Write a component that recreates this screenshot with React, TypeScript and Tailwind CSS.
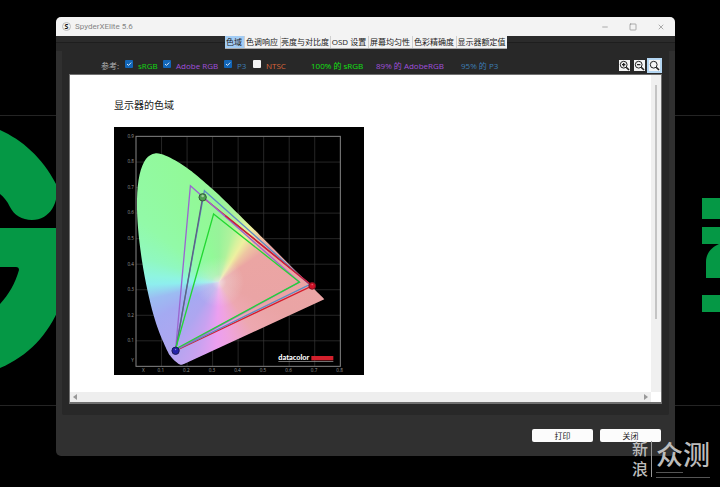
import { useState } from "react";
import { Minus, Square, X } from "lucide-react";

const TABS = [
  { name: "色域", width: "w-5" },
  { name: "色调响应", width: "w-9" },
  { name: "亮度与对比度", width: "w-[50px]" },
  { name: "OSD 设置", width: "w-[38px]" },
  { name: "屏幕均匀性", width: "w-11" },
  { name: "色彩精确度", width: "w-11" },
  { name: "显示器额定值", width: "w-[50px]" },
];

const SPACES = [
  { id: "srgb", name: "sRGB", on: true, style: "w-[38px] text-[#12d812]" },
  { id: "adobe", name: "Adobe RGB", on: true, style: "w-[61px] text-[#a050dc]" },
  { id: "p3", name: "P3", on: true, style: "w-[29px] text-[#3d7eb4]" },
  { id: "ntsc", name: "NTSC", on: false, style: "w-[58px] text-[#d8663a]" },
];

const COVERAGE = [
  { text: "100% 的 sRGB", style: "w-[65px] text-[#12e012]" },
  { text: "89% 的 AdobeRGB", style: "w-[85px] text-[#a050dc]" },
  { text: "95% 的 P3", style: "text-[#3d7eb4]" },
];

// CIE 1931 spectral locus, 380 nm to 700 nm
const LOCUS = [
  [0.19, 0.01], [0.1741, 0.006], [0.1566, 0.0177], [0.1355, 0.0399],
  [0.1241, 0.0578], [0.0913, 0.1327], [0.0687, 0.2007], [0.0454, 0.295],
  [0.0235, 0.4127], [0.0082, 0.5384], [0.0039, 0.6548], [0.0139, 0.7502],
  [0.0389, 0.812], [0.0743, 0.8338], [0.1142, 0.8262], [0.1547, 0.8059],
  [0.1929, 0.7816], [0.2296, 0.7543], [0.3016, 0.6923], [0.3731, 0.6245],
  [0.5125, 0.4866], [0.627, 0.3725], [0.6915, 0.3083], [0.7376, 0.263],
];

// The chart is drawn at three units per pixel
const px = (x: number) => 66 + x * 766;
const py = (y: number) => 718 - y * 766;

function points(list: number[][]) {
  return list.map(([x, y]) => `${px(x)},${py(y)}`).join(" ");
}

function smoothPath(list: number[][]) {
  const p = list.map(([x, y]) => [px(x), py(y)]);
  let d = `M${p[0][0]} ${p[0][1]}`;
  for (let i = 0; i < p.length - 1; i++) {
    const a = p[Math.max(i - 1, 0)];
    const b = p[i];
    const c = p[i + 1];
    const e = p[Math.min(i + 2, p.length - 1)];
    d += `C${b[0] + (c[0] - a[0]) / 6} ${b[1] + (c[1] - a[1]) / 6} ${c[0] - (e[0] - b[0]) / 6} ${c[1] - (e[1] - b[1]) / 6} ${c[0]} ${c[1]}`;
  }
  return d + "Z";
}

function GamutChart() {
  const xs = [0.1, 0.2, 0.3, 0.4, 0.5, 0.6, 0.7];
  const ys = [...xs, 0.8];

  return (
    <svg
      viewBox="0 0 750 744"
      className="block h-[248px] w-[250px] bg-black"
      role="img"
      aria-label="显示器的色域"
    >
      <defs>
        <clipPath id="locus">
          <path d={smoothPath(LOCUS)} />
        </clipPath>
        <radialGradient id="white">
          <stop offset="0" stopColor="#f2e6ea" stopOpacity="0.85" />
          <stop offset="0.3" stopColor="#f0e4e8" stopOpacity="0.35" />
          <stop offset="1" stopColor="#eee" stopOpacity="0" />
        </radialGradient>
      </defs>

      <g stroke="#3a3a3a" strokeWidth="2">
        {xs.map((v) => (
          <line key={v} x1={px(v)} x2={px(v)} y1={py(0.9)} y2={py(0)} />
        ))}
        {ys.map((v) => (
          <line key={v} x1={px(0)} x2={px(0.8)} y1={py(v)} y2={py(v)} />
        ))}
      </g>
      <rect x="66" y="28" width="613" height="690" fill="none" stroke="#858585" strokeWidth="3" />

      <g clipPath="url(#locus)">
        <foreignObject x="0" y="0" width="750" height="744">
          <div className="h-[744px] w-[750px] bg-[conic-gradient(from_0deg_at_315px_465px,#98f39a_0deg,#b0f29c_14deg,#d8f29e_24deg,#eef0a0_31deg,#eec6a2_42deg,#eba5a3_56deg,#eaa4a5_115deg,#eda8b0_145deg,#efa3df_170deg,#ec9ff0_182deg,#c8a2f0_198deg,#aea6f0_215deg,#a4aaf2_240deg,#9cbcf2_256deg,#8eeeee_268deg,#8ff5e0_275deg,#90f8c0_288deg,#92faa8_308deg,#92f998_345deg,#98f39a_360deg)]" />
        </foreignObject>
        <circle cx="315" cy="465" r="75" fill="url(#white)" />
      </g>

      <g fill="none" strokeWidth="4">
        <polyline points={points([[0.261, 0.662], [0.69, 0.315], [0.155, 0.061]])} stroke="#d51c2c" />
        <polygon points={points([[0.268, 0.688], [0.68, 0.32], [0.155, 0.064]])} stroke="#5d8cc4" />
        <polygon points={points([[0.213, 0.707], [0.64, 0.33], [0.155, 0.064]])} stroke="#9a66d0" />
        <line x1={px(0.35)} y1={py(0.59)} x2={px(0.69)} y2={py(0.315)} stroke="#c81e3c" />
        <polyline points={points([[0.261, 0.662], [0.155, 0.061]])} stroke="#5d6480" />
        <polygon points={points([[0.304, 0.597], [0.64, 0.33], [0.155, 0.068]])} stroke="#22d832" />
      </g>

      <g strokeWidth="3">
        <circle cx={px(0.261)} cy={py(0.662)} r="11" fill="#4f9e4f" stroke="#33583a" />
        <circle cx={px(0.69)} cy={py(0.315)} r="10" fill="#d01026" stroke="#7a1420" />
        <circle cx={px(0.155)} cy={py(0.061)} r="11" fill="#2424a8" stroke="#1b1b58" />
      </g>
      <g fill="#fff" fillOpacity="0.45">
        <circle cx={px(0.261)} cy={py(0.667)} r="4" />
        <circle cx={px(0.69)} cy={py(0.32)} r="2" />
        <circle cx={px(0.155)} cy={py(0.066)} r="2" />
      </g>

      <g fill="#999" fontFamily="Open Sans, sans-serif" fontSize="14">
        {[...ys, 0.9].map((v) => (
          <text key={v} x="60" y={py(v) + 4} textAnchor="end">
            {v}
          </text>
        ))}
        {[...xs, 0.8].map((v) => (
          <text key={v} x={px(v) - 2} y="735" textAnchor="middle">
            {v}
          </text>
        ))}
        <text x="84" y="735">X</text>
        <text x="52" y="704">Y</text>
      </g>

      <text x="493" y="699" fill="#fff" fontFamily="Lato, sans-serif" fontSize="22" fontWeight="900">
        datacolor
      </text>
      <rect x="592" y="687" width="66" height="13" fill="#d3202c" />
      <rect x="493" y="703" width="165" height="2" fill="#aaa" />
    </svg>
  );
}

function Wallpaper() {
  return (
    <div className="absolute inset-0 overflow-hidden">
      <div className="absolute inset-x-0 top-[115px] h-[291px] border-y border-[#242424]" />
      <svg className="absolute top-[115px] left-0 h-[290px] w-[60px]" viewBox="0 115 60 290" fill="#059845">
        <path d="M0 130C22 140 42 157 56 184C60 202 50 220 32 220C22 220 14 215 10 207C7 201 4 197 0 194Z" />
        <path d="M0 228H60V306C48 335 28 356 0 368V304C9 294 15 284 19 270Q19 267 16 267H0Z" />
      </svg>
      <svg className="absolute top-[190px] right-0 h-[130px] w-[18px]" viewBox="702 190 18 130" fill="#059845">
        <path d="M702 198H720V219H702ZM702 227H720V278H706V262C706 253 712 247 719 244H702ZM702 295H720V312H702Z" />
      </svg>
    </div>
  );
}

function ZoomIcon({ sign }: { sign?: "plus" | "minus" }) {
  return (
    <svg viewBox="0 0 11 11" className="size-[11px]" fill="none" stroke="#222">
      <circle cx="4.7" cy="4.7" r="3.4" />
      <path d="M7.2 7.2L10 10" strokeWidth="1.6" />
      {sign && <path d="M3 4.7H6.4" strokeWidth="1.3" />}
      {sign === "plus" && <path d="M4.7 3V6.4" strokeWidth="1.3" />}
    </svg>
  );
}

function Toolbar() {
  const [checked, setChecked] = useState<Record<string, boolean>>(
    Object.fromEntries(SPACES.map((s) => [s.id, s.on])),
  );

  return (
    <div className="flex h-[15px] items-center pl-8 text-[8px]">
      <span className="w-6 text-[#b0b0b0]">参考:</span>
      {SPACES.map((s) => (
        <label key={s.id} className={`flex items-center gap-[5px] whitespace-nowrap ${s.style}`}>
          <span className="relative mb-[3px] block size-2">
            <input
              type="checkbox"
              className="block size-2 appearance-none rounded-[1px] bg-[#f4f4f4] checked:bg-[#1266b8]"
              checked={checked[s.id]}
              onChange={(e) => setChecked({ ...checked, [s.id]: e.target.checked })}
            />
            {checked[s.id] && (
              <svg viewBox="0 0 8 8" className="pointer-events-none absolute inset-0" fill="none" stroke="#d8e8f8">
                <path d="M2 4L3.5 5.4L6.2 2.6" />
              </svg>
            )}
          </span>
          {s.name}
        </label>
      ))}
      {COVERAGE.map((c) => (
        <span key={c.text} className={`whitespace-nowrap ${c.style}`}>
          {c.text}
        </span>
      ))}
      <div className="ml-auto flex items-center">
        <button type="button" aria-label="放大" className="mr-1 bg-[#f4f4f4]">
          <ZoomIcon sign="plus" />
        </button>
        <button type="button" aria-label="缩小" className="mr-[2px] bg-[#f4f4f4]">
          <ZoomIcon sign="minus" />
        </button>
        <button type="button" aria-label="适合窗口" className="border-2 border-[#b4d6f2] bg-[#f4f4f4]">
          <ZoomIcon />
        </button>
      </div>
    </div>
  );
}

function Watermark() {
  return (
    <div className="absolute right-[10px] bottom-[10px] flex items-start gap-1 font-medium text-[#bcbcbc]">
      <div className="flex w-[20px] flex-col gap-1 border-r border-[#999] text-[16px] leading-4">
        <span>新</span>
        <span>浪</span>
      </div>
      <div className="flex flex-col gap-1">
        <div className="text-[27px] leading-[27px]">众测</div>
        <div className="h-px w-[27px] bg-[#555]" />
        <div className="h-px bg-[#555]" />
      </div>
    </div>
  );
}

export default function App() {
  const [tab, setTab] = useState(TABS[0].name);

  return (
    <main className="relative min-h-screen bg-black pt-[17px] pr-[45px] pb-8 pl-14 font-['Open_Sans','Noto_Sans_CJK_SC',sans-serif]">
      <Wallpaper />

      <section className="relative overflow-hidden rounded-[5px] bg-[#303030]">
        <header className="flex h-[19px] items-center bg-[#f3f3f3] pl-[6px] text-[8px] text-[#858585]">
          <span className="mr-1 flex size-[9px] items-center justify-center rounded-full border border-[#bbb] text-[7px] leading-none font-bold text-[#111]">
            S
          </span>
          <h1 className="font-['Roboto',sans-serif]">SpyderXElite 5.6</h1>
          <div className="ml-auto flex gap-5 pr-[10px]">
            <button type="button" aria-label="最小化">
              <Minus className="size-2" />
            </button>
            <button type="button" aria-label="最大化">
              <Square className="size-2" />
            </button>
            <button type="button" aria-label="关闭窗口">
              <X className="size-2" />
            </button>
          </div>
        </header>

        <nav className="flex h-[15px] justify-center bg-[linear-gradient(#2b2b2b_6px,#1e1e1e_6px,#1e1e1e_7px,#282828_7px)]">
          <div className="flex h-[13px] divide-x divide-[#cfcfcf] border-b border-[#aaa] bg-[#f3f3f3]">
            {TABS.map((t) => (
              <button
                key={t.name}
                type="button"
                onClick={() => setTab(t.name)}
                className={`flex items-center justify-center text-[8px] leading-3 whitespace-nowrap text-[#222] ${t.width} ${tab === t.name ? "bg-[#a3cdf5]" : ""}`}
              >
                {t.name}
              </button>
            ))}
          </div>
        </nav>

        <div className="mx-[6px] rounded-b-xs bg-[#282828] px-[7px] pt-[7px] pb-[11px]">
          <Toolbar />
          <div className="mt-px border border-b-2 border-[#707070] bg-white">
            <div className="flex">
              <div className="grow px-11 pt-[22px] pb-[17px]">
                <h2 className="mb-[14px] text-[10px] leading-4 text-[#222]">显示器的色域</h2>
                <GamutChart />
              </div>
              <div className="w-[10px] bg-[#f0f0f0] px-1 pt-[10px]">
                <div className="h-[234px] w-[2px] bg-[#c4c4c4]" />
              </div>
            </div>
            <div className="mr-[10px] flex h-[10px] items-center justify-between bg-[#eee] px-[3px]">
              <svg viewBox="0 0 4 6" className="h-[6px] w-1" fill="#999">
                <path d="M4 0V6L0 3Z" />
              </svg>
              <svg viewBox="0 0 4 6" className="h-[6px] w-1" fill="#999">
                <path d="M0 0V6L4 3Z" />
              </svg>
            </div>
          </div>
        </div>

        <footer className="flex justify-end gap-[7px] px-[14px] pt-[14px] pb-[14px] text-[8px] text-[#222]">
          <button type="button" className="h-[13px] w-[61px] rounded-xs bg-[#fcfcfc] leading-3">
            打印
          </button>
          <button type="button" className="h-[13px] w-[61px] rounded-xs bg-[#fcfcfc] leading-3">
            关闭
          </button>
        </footer>
      </section>

      <Watermark />
    </main>
  );
}
